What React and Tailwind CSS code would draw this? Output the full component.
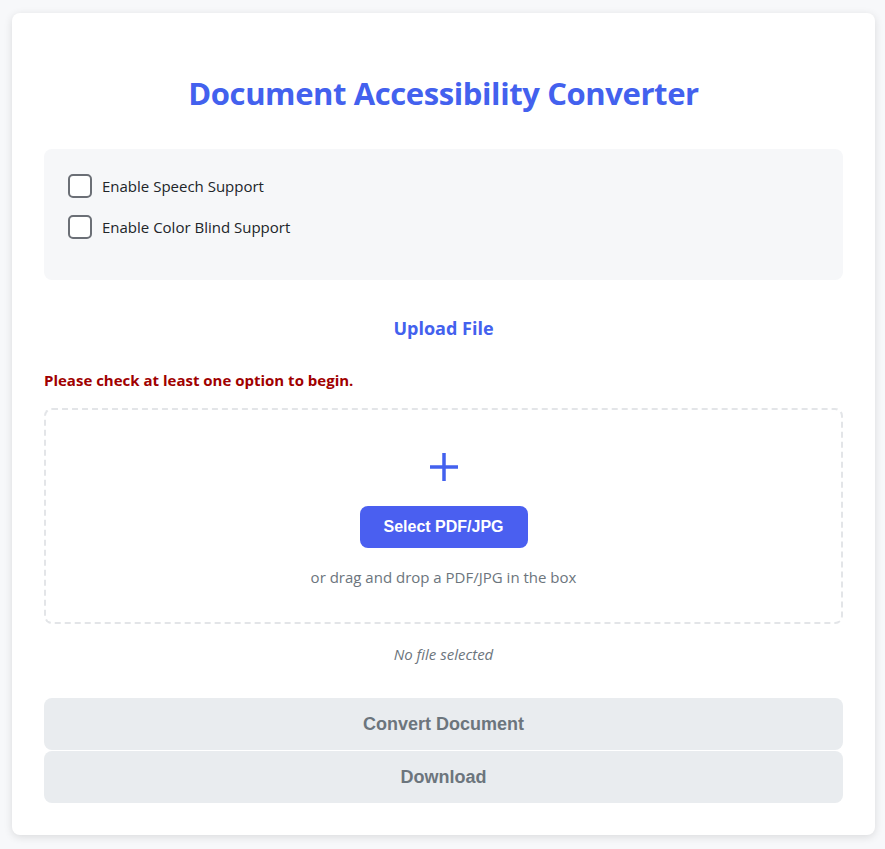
import { useState } from 'react'

export default function App() {
  const [speech, setSpeech] = useState(false)
  const [colorBlind, setColorBlind] = useState(false)

  return (
    <div className="min-h-screen bg-[#f7f8fa] pl-3 pr-[10px] pt-[13px] pb-[14px] font-['Open_Sans',sans-serif]">
      <div className="bg-white rounded-lg shadow-[0_2px_8px_rgba(0,0,0,0.12)] px-8 pt-[58px] pb-8">
        <h1 className="text-center text-[31px] font-bold text-[#4361ee] leading-[44px] tracking-[-0.4px]">
          Document Accessibility Converter
        </h1>

        <div className="mt-[34px] bg-[#f6f7f9] rounded-lg px-6 pt-[25px] pb-[41px] flex flex-col gap-[17px]">
          {[
            { label: 'Enable Speech Support', value: speech, set: setSpeech },
            { label: 'Enable Color Blind Support', value: colorBlind, set: setColorBlind },
          ].map(({ label, value, set }) => (
            <label key={label} className="flex items-center gap-[10px] cursor-pointer">
              <span
                onClick={() => set(!value)}
                className="w-6 h-6 rounded-[5px] border-2 border-[#6b6f76] bg-white"
              />
              <span className="text-[15px] text-[#212529] leading-6">{label}</span>
            </label>
          ))}
        </div>

        <h2 className="mt-[36px] text-center text-[18px] font-bold text-[#4361ee] leading-6">Upload File</h2>

        <p className="mt-[28px] text-[15px] font-bold text-[#a00000] leading-6">
          Please check at least one option to begin.
        </p>

        <div className="mt-[16px] border-2 border-dashed border-[#e3e5e8] rounded-lg flex flex-col items-center pt-[42px] pb-[33px]">
          <svg width="30" height="30" viewBox="0 0 30 30" className="text-[#4361ee]">
            <path d="M15 1v28M1 15h28" stroke="currentColor" strokeWidth="3.5" />
          </svg>
          <button className="mt-[24px] w-[168px] h-[42px] rounded-lg bg-[#4a5ff0] text-white font-bold text-[16px] font-['Liberation_Sans',Arial,sans-serif]">
            Select PDF/JPG
          </button>
          <p className="mt-[17px] text-[15px] text-[#6c757d] leading-6">or drag and drop a PDF/JPG in the box</p>
        </div>

        <p className="mt-[18px] text-center text-[15px] italic text-[#6c757d] leading-6">No file selected</p>

        <div className="mt-[32px] flex flex-col gap-px font-['Liberation_Sans',Arial,sans-serif]">
          <button className="h-[52px] rounded-lg bg-[#e9ecef] text-[#6c757d] font-bold text-[18px]">Convert Document</button>
          <button className="h-[52px] rounded-lg bg-[#e9ecef] text-[#6c757d] font-bold text-[18px]">Download</button>
        </div>
      </div>
    </div>
  )
}
